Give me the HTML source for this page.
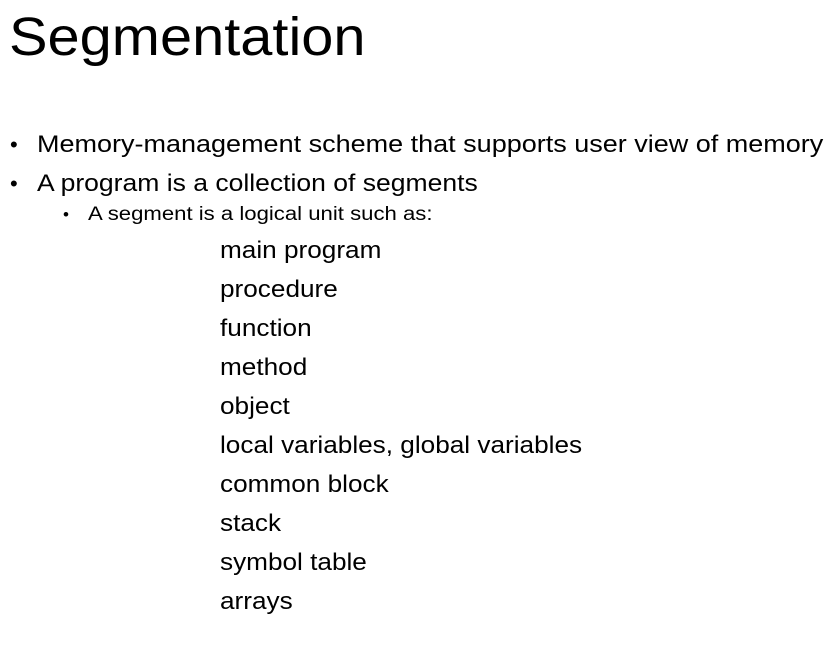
<!DOCTYPE html>
<html><head><style>
body{margin:0;width:837px;height:646px;background:#fff;font-family:"Liberation Sans",sans-serif;color:#000;position:relative;overflow:hidden}
.a{position:absolute;white-space:nowrap;line-height:1;transform-origin:left top}
</style></head><body>
<div class="a" style="left:9px;top:10px;font-size:54px;transform:scaleX(1.07);">Segmentation</div>
<div class="a" style="left:10px;top:134px;font-size:22px;">•</div>
<div class="a" style="left:37px;top:133px;font-size:24px;transform:scaleX(1.125);">Memory-management scheme that supports user view of memory</div>
<div class="a" style="left:10px;top:173px;font-size:22px;">•</div>
<div class="a" style="left:37px;top:172px;font-size:24px;transform:scaleX(1.105);">A program is a collection of segments</div>
<div class="a" style="left:63px;top:206px;font-size:17px;">•</div>
<div class="a" style="left:88px;top:205px;font-size:19px;transform:scaleX(1.165);">A segment is a logical unit such as:</div>
<div class="a" style="left:220px;top:231px;font-size:24px;line-height:39px;transform:scaleX(1.09);">main program<br>procedure<br>function<br>method<br>object<br>local variables, global variables<br>common block<br>stack<br>symbol table<br>arrays</div>
</body></html>
